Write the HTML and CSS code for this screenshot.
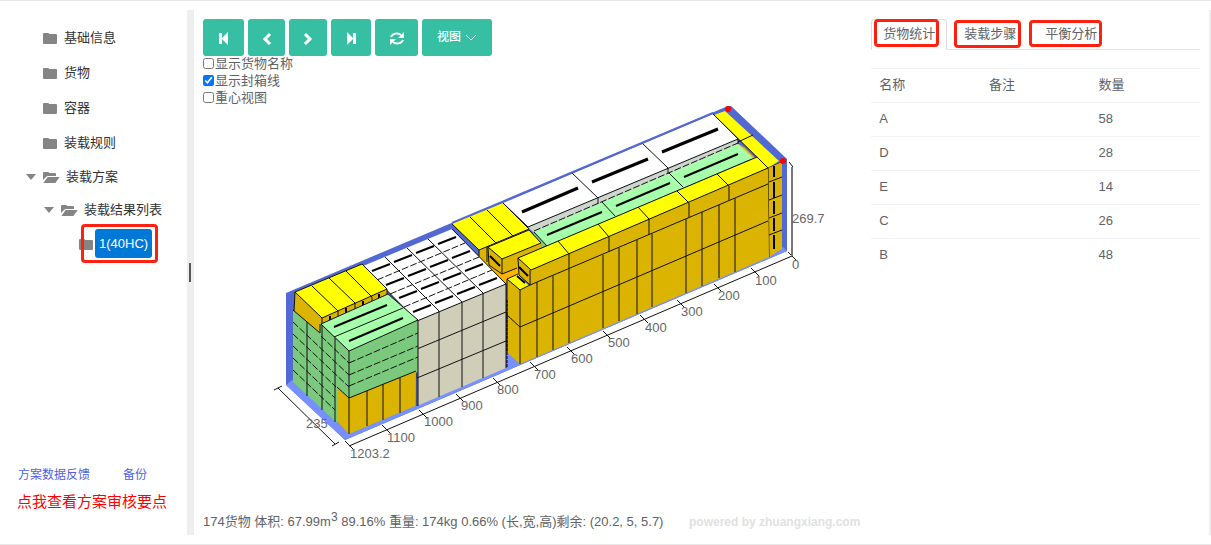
FILE: index.html
```html
<!DOCTYPE html>
<html lang="zh-CN">
<head>
<meta charset="utf-8">
<title>装载方案</title>
<link rel="stylesheet" href="styles.css">
</head>
<body>
<svg class="defs" aria-hidden="true">
  <symbol id="folder" viewBox="0 0 15 12"><path d="M0 2Q0 1 1 1H5Q6 1 6 2H13Q14 2 14 3V11Q14 12 13 12H1Q0 12 0 11Z"/></symbol>
  <symbol id="folder-open" viewBox="0 0 17 12"><path d="M0 9V2Q0 1 1 1H5Q6 1 6 2H12Q13 2 13 3V5H5Q4 5 3 6Z"/><path d="M4 7Q4 6 5 6H16Q17 6 16 7L13 11Q13 12 12 12H1Q0 12 1 11Z"/></symbol>
  <symbol id="caret" viewBox="0 0 10 6"><path d="M0 0H10L5 6Z"/></symbol>
</svg>
<div class="app">
  <nav class="sidebar">
    <ul class="tree">
      <li class="node"><svg class="folder"><use href="#folder"/></svg><span>基础信息</span></li>
      <li class="node"><svg class="folder"><use href="#folder"/></svg><span>货物</span></li>
      <li class="node"><svg class="folder"><use href="#folder"/></svg><span>容器</span></li>
      <li class="node"><svg class="folder"><use href="#folder"/></svg><span>装载规则</span></li>
      <li class="node node-open"><svg class="caret"><use href="#caret"/></svg><svg class="folder-open"><use href="#folder-open"/></svg><span>装载方案</span></li>
      <li class="node node-open node-sub"><svg class="caret"><use href="#caret"/></svg><svg class="folder-open"><use href="#folder-open"/></svg><span>装载结果列表</span></li>
      <li class="node node-leaf"><svg class="folder"><use href="#folder"/></svg><button class="selected" type="button">1(40HC)<i class="mark mark-leaf"></i></button></li>
    </ul>
    <div class="links">
      <a href="#feedback">方案数据反馈</a>
      <a href="#backup">备份</a>
    </div>
    <a class="review" href="#review">点我查看方案审核要点</a>
  </nav>
  <div class="splitter"><span class="grip"></span></div>
  <main class="main">
    <section class="viewer">
      <div class="toolbar">
        <button class="btn first" type="button" aria-label="第一步"><svg viewBox="0 0 12 14"><path d="M1 2H4V7L10 1V14L4 8V13H1Z"/></svg></button>
        <button class="btn prev" type="button" aria-label="上一步"><svg viewBox="0 0 12 14"><path class="line" d="M9 3L4 8L9 13"/></svg></button>
        <button class="btn next" type="button" aria-label="下一步"><svg viewBox="0 0 12 14"><path class="line" d="M3 3L8 8L3 13"/></svg></button>
        <button class="btn last" type="button" aria-label="最后一步"><svg viewBox="0 0 12 14"><path d="M11 2H8V7L2 1V14L8 8V13H11Z"/></svg></button>
        <button class="btn reload" type="button" aria-label="刷新"><svg class="wide" viewBox="0 0 14 14"><path class="line" d="M1 6A6 5 0 0 1 11 4M13 9A6 5 0 0 1 3 11"/><path d="M14 1V7H8ZM0 14V8H6Z"/></svg></button>
        <button class="btn view" type="button">视图<svg class="chevron" viewBox="0 0 12 7"><path class="thin" d="M1 1L6 6L11 1"/></svg></button>
      </div>
      <div class="options">
        <label><input type="checkbox">显示货物名称</label>
        <label><input type="checkbox" checked>显示封箱线</label>
        <label><input type="checkbox">重心视图</label>
      </div>
      <svg class="scene" viewBox="203 106 640 360" role="img" aria-label="装载三维视图">
        <!-- container shell and floor -->
        <path class="shell" d="M286 293L728 106H731L787 159V251L345 440L286 385Z"/>
        <path class="floor" d="M286 385L292 380L349 400L500 350L770 256L783 247L787 251L345 440Z"/>

        <!-- long white cartons -->
        <path class="shade" d="M528 227L738 139V145L534 233Z"/>
        <path class="white" d="M503 203L713 114L738 139L528 227Z"/>
        <path class="edge" d="M503 203L528 227L738 139L713 114M572 173L598 198V204M642 143L668 168V174M738 139V145"/>
        <path class="rim" d="M452 223L713 113"/>
        <path class="tape tape-wide" d="M522 212L578 188M592 182L648 159M662 152L718 129"/>

        <!-- rear column -->
        <path class="yellow" d="M714 115L725 111L779 161L768 168Z"/>
        <path class="edge" d="M714 115L768 168L782 162M738 142L753 135"/>
        <path class="gold" d="M768 168L782 162V249L769 257Z"/>
        <path class="edge" d="M768 168L769 257M769 182L782 177M769 200L782 195M769 218L782 213M769 235L782 230"/>
        <path class="tape" d="M774 166V177M774 182V198M774 201V214M774 218V231M774 235V249"/>

        <!-- green row behind the front cartons -->
        <path class="orange" d="M737 143L745 148L755 158L748 160Z"/>
        <path class="green-side" d="M533 231L547 245L541 248L541 243L534 236Z"/>
        <path class="green" d="M534 232L738 144L753 158L547 246Z"/>
        <path class="edge" d="M534 232L547 246M602 202L615 216M669 173L683 187"/>
        <path class="edge dash" d="M534 231L738 143"/>
        <path class="tape" d="M547 235L602 212M616 206L670 183M684 177L738 154"/>

        <!-- three yellow cartons -->
        <path class="gold" d="M479 250L529 229L541 250L500 282L479 257Z"/>
        <path class="yellow" d="M452 224L503 203L529 229L479 250Z"/>
        <path class="edge" d="M452 224L479 250L529 229L503 203M470 217L496 243M487 210L513 236M479 250V257M487 247V262"/>
        <path class="orange" d="M488 264L502 274L520 265V276L507 281L506 286Z"/>
        <path class="gold" d="M488 247L502 259L541 243V250L518 258V268L502 274L489 265Z"/>
        <path class="yellow" d="M488 247L529 230L541 243L502 259Z"/>
        <path class="edge" d="M488 247L529 230L541 243L502 259ZM488 247L489 265L502 274V259M502 274L517 268"/>
        <path class="tape" d="M490 256L500 266"/>

        <!-- front wall -->
        <path class="gold" d="M507 279L520 289L530 285L531 270L768 168L769 257L520 364L507 352Z"/>
        <path class="yellow" d="M507 279L518 274L529 286L520 290Z"/>
        <path class="gold" d="M518 258L531 270L530 285L519 275Z"/>
        <path class="yellow" d="M518 258L757 157L768 168L531 270Z"/>
        <path class="edge" d="M518 258L531 270L768 168L757 157ZM518 258L519 275L530 285V270M507 279L520 290L530 285M507 279L518 274M507 315L520 327L768 221M530 285L768 184M507 279V352M520 290V364"/>
        <path class="edge" d="M558 241L569 254V343M598 224L609 237V252M638 207L649 219V235M677 191L689 203V217M717 174L729 186V200M537 282V357M553 276V350M603 255V328M619 248V321M637 240V314M652 234V307M686 219V293M702 212V286M719 205V278M735 198V272"/>
        <path class="tape" d="M517 276L525 283M519 267L528 276"/>

        <!-- small white cartons -->
        <path class="stone" d="M417 321L506 284V368L417 406Z"/>
        <path class="white" d="M363 266L452 229L506 284L417 321Z"/>
        <path class="edge" d="M452 229L506 284L417 321L363 266M385 257L439 311V397M407 248L462 302V387M428 239L483 293V378M417 321V406M506 284V368M417 349L506 312M417 378L506 341"/>
        <path class="edge dash" d="M377 280L465 243M390 294L479 257M404 307L492 270"/>
        <g id="tapes"><path class="tape" d="M372 271l18-7m4-2l18-7m4-2l18-7m4-2l18-7"/></g>
        <use href="#tapes" x="14" y="14"/>
        <use href="#tapes" x="27" y="27"/>
        <use href="#tapes" x="41" y="41"/>
        <path class="tape tape-thin" d="M507 300V368"/>

        <!-- left yellow cartons -->
        <path class="gold" d="M295 292L322 318L387 289V296L320 333L294 311Z"/>
        <path class="yellow" d="M295 292L362 264L387 289L322 318Z"/>
        <path class="edge" d="M295 292L362 264L387 289L322 318ZM312 286L338 311V318M329 278L355 303V310M346 271L372 297V304M322 318V328M295 292L294 311M387 289V295"/>
        <path class="tape" d="M330 316V321M346 308V313M363 301V306M379 294V299"/>

        <!-- green stack -->
        <path class="green-side" d="M293 310L320 333V324L349 351L418 320V372L349 398L337 388V423L293 382Z"/>
        <path class="green" d="M321 324L388 294L418 320L349 351Z"/>
        <path class="gold" d="M337 387L349 398L416 371L415 406L349 434L337 421Z"/>
        <path class="edge" d="M321 324L388 294L418 320L349 351ZM334 337L403 308M349 351V434M418 320V406M349 398L416 371M337 387L349 398M367 391V426M383 384V420M400 378V413"/>
        <path class="edge dash" d="M349 363L418 333M349 375L418 346M349 386L418 357M293 322L349 375M293 334L349 387M293 346L336 387M293 358L335 398M293 370L335 410M321 336L349 363"/>
        <path class="edge" d="M293 310L320 333V324M307 322V396M322 325V410M335 338V422"/>
        <path class="tape" d="M334 327L387 305M349 341L403 318"/>

        <!-- rulers -->
        <path class="edge" d="M349 446L792 256M278 388L335 444M274 390L282 386M332 446L339 442M345 441L353 449M789 162L793 167M788 252L796 260M751 268L759 276M714 284L722 292M677 300L685 308M640 315L648 323M603 331L611 339M567 347L575 355M530 362L538 370M493 378L501 386M456 394L464 402M419 410L427 418M382 425L390 433"/>
        <path class="post" d="M792 167V256"/>
        <circle class="pin" cx="728" cy="109" r="3"/>
        <circle class="pin" cx="783" cy="161" r="3"/>
        <g class="scale">
          <text x="792" y="223">269.7</text>
          <text x="792" y="269">0</text>
          <text x="755" y="285">100</text>
          <text x="718" y="300">200</text>
          <text x="681" y="316">300</text>
          <text x="645" y="332">400</text>
          <text x="608" y="347">500</text>
          <text x="571" y="363">600</text>
          <text x="534" y="379">700</text>
          <text x="497" y="394">800</text>
          <text x="461" y="410">900</text>
          <text x="424" y="426">1000</text>
          <text x="387" y="442">1100</text>
          <text x="350" y="458">1203.2</text>
          <text x="306" y="428">235</text>
        </g>
      </svg>
      <footer class="summary">
        <span>174货物 体积: 67.99m<sup>3</sup> 89.16% 重量: 174kg 0.66% (长,宽,高)剩余: (20.2, 5, 5.7)</span>
        <span class="powered">powered by zhuangxiang.com</span>
      </footer>
    </section>
    <aside class="panel">
      <div class="tabs" role="tablist">
        <button class="tab active" type="button" role="tab" aria-selected="true">货物统计<i class="mark mark-a"></i></button>
        <button class="tab" type="button" role="tab">装载步骤<i class="mark mark-b"></i></button>
        <button class="tab" type="button" role="tab">平衡分析<i class="mark mark-c"></i></button>
      </div>
      <table class="stats">
        <thead><tr><th>名称</th><th>备注</th><th>数量</th></tr></thead>
        <tbody>
          <tr><td>A</td><td></td><td>58</td></tr>
          <tr><td>D</td><td></td><td>28</td></tr>
          <tr><td>E</td><td></td><td>14</td></tr>
          <tr><td>C</td><td></td><td>26</td></tr>
          <tr><td>B</td><td></td><td>48</td></tr>
        </tbody>
      </table>
    </aside>
  </main>
  <div class="edge-bar"></div>
</div>
</body>
</html>
```
FILE: styles.css
```css
* { box-sizing: border-box; }
body {
  margin: 0;
  font: 13px/17px "Liberation Sans", "Noto Sans CJK SC", sans-serif;
  color: #606266;
  background: #fff;
}
button { font: inherit; border: 0; cursor: pointer; }
a { text-decoration: none; }
.defs { position: absolute; width: 0; height: 0; }
.app {
  display: flex;
  min-height: 100vh;
  padding: 9px 0;
  border-top: 1px solid #e8e8e8;
  border-bottom: 1px solid #e8e8e8;
}

/* sidebar */
.sidebar {
  display: flex;
  flex-direction: column;
  flex: 0 0 187px;
  padding: 10px 0 24px;
}
.tree { margin: 0; padding: 0; list-style: none; color: #303133; }
.node {
  display: flex;
  align-items: center;
  gap: 6px;
  height: 35px;
  padding-left: 43px;
}
.node svg { flex: none; fill: #858585; }
.folder { width: 15px; height: 12px; }
.folder-open { width: 17px; height: 12px; }
.caret { width: 10px; height: 6px; margin-right: 1px; }
.node-open { height: 33px; padding-left: 26px; }
.node-sub { padding-left: 44px; }
.node-leaf { gap: 1px; padding-left: 79px; }
.selected {
  position: relative;
  height: 29px;
  padding: 0 4px;
  border-radius: 3px;
  color: #fff;
  background: #0078d7;
}
.mark {
  position: absolute;
  border: 3px solid #ff2010;
  border-radius: 4px;
  pointer-events: none;
}
.mark-leaf { inset: -5px -6px -5px -14px; }
.links {
  display: flex;
  gap: 33px;
  margin-top: auto;
  padding: 0 18px;
  font-size: 12px;
}
.links a { color: #5060e0; }
.review {
  padding: 9px 17px 0;
  font-size: 15px;
  line-height: 18px;
  color: #f00;
}

/* splitter */
.splitter {
  display: flex;
  align-items: center;
  flex: 0 0 7px;
  padding-left: 2px;
  background: #eee;
}
.grip { width: 2px; height: 19px; background: #555; }
.edge-bar { flex: 0 0 2px; background: #eee; }

/* main area */
.main {
  display: grid;
  grid-template-columns: 2fr 1fr;
  gap: 11px;
  flex: 1;
  padding: 9px 9px 0 9px;
}
.viewer { display: flex; flex-direction: column; min-width: 0; }
.toolbar { display: flex; gap: 4px; }
.btn {
  display: flex;
  align-items: center;
  justify-content: center;
  width: 37px;
  height: 37px;
  padding: 0;
  border-radius: 3px;
  color: #fff;
  background: #36bfa3;
}
.btn svg { width: 12px; height: 14px; fill: #fff; }
.btn .wide { width: 14px; }
.btn .line { fill: none; stroke: #fff; stroke-width: 3; }
.btn .wide .line { stroke-width: 2; }
.btn .thin { fill: none; stroke: #fff; }
.first { width: 41px; }
.next { width: 38px; }
.last { width: 40px; }
.reload { width: 43px; }
.view { width: 70px; gap: 4px; font-size: 12px; font-weight: 500; }
.btn .chevron { width: 12px; height: 7px; }
.options { margin-top: -1px; }
.options label { display: flex; align-items: center; height: 17px; }
.options input { width: 11px; height: 11px; margin: 0 1px 0 0; }
.scene { flex: none; width: 640px; height: 360px; }
.summary {
  display: flex;
  align-items: baseline;
  justify-content: space-between;
  margin-top: auto;
  padding-bottom: 4px;
  white-space: nowrap;
}
.summary sup { font-size: 12px; line-height: 0; }
.powered { font-size: 12px; font-weight: bold; color: #e0e2e0; }

/* scene */
.shell { fill: #5268d2; }
.floor { fill: #7690ff; }
.rim { fill: none; stroke: #5268d2; stroke-width: 2; }
.white { fill: #fff; }
.shade { fill: #ccd6cc; }
.stone { fill: #d0cdb9; }
.yellow { fill: #ff0; }
.gold { fill: #dab400; }
.orange { fill: #ffb400; }
.green { fill: #a6ffaa; }
.green-side { fill: #7bc97d; }
.edge { fill: none; stroke: #111; stroke-width: 1; }
.dash { stroke-dasharray: 7 2; }
.tape { fill: none; stroke: #000; stroke-width: 2; }
.tape-wide { stroke-width: 3; }
.tape-thin { stroke-width: 1; stroke-dasharray: 3 1; }
.post { fill: none; stroke: #777; stroke-width: 2; }
.pin { fill: #f00; }
.scale { font-size: 13px; fill: #666; }

/* statistics panel */
.tabs {
  display: flex;
  gap: 5px;
  height: 31px;
  border-bottom: 1px solid #e4e4e8;
}
.tab {
  position: relative;
  height: 31px;
  padding: 0 11px 3px;
  border: 1px solid transparent;
  color: #606266;
  background: transparent;
}
.active {
  border-color: #dddde0;
  border-bottom-color: #fff;
  border-radius: 4px 4px 0 0;
  background: #fff;
}
.mark-a { inset: -1px 7px 2px 2px; }
.mark-b { inset: 0 6px 1px 1px; }
.mark-c { inset: 0 6px 2px -5px; }
.stats {
  width: 100%;
  margin-top: 18px;
  table-layout: fixed;
  border-collapse: collapse;
}
.stats th, .stats td {
  height: 34px;
  padding: 0 8px 2px;
  border-top: 1px solid #f1f2f4;
  font-weight: normal;
  text-align: left;
}
```
